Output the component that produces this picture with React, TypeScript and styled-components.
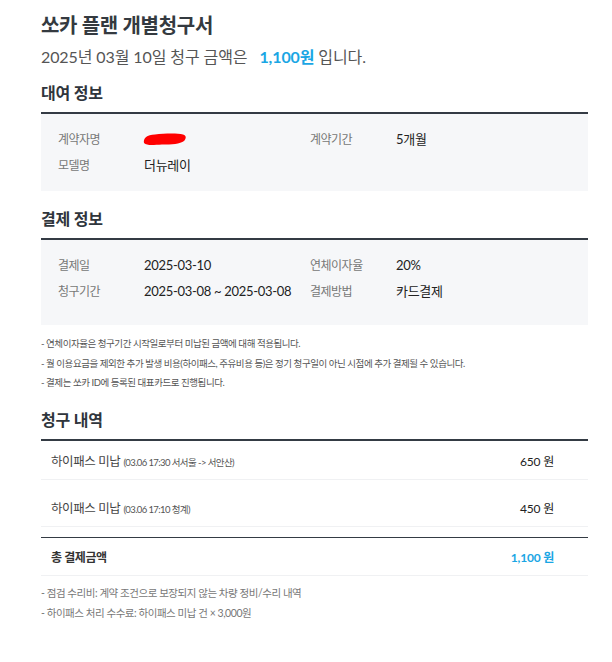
import React from "react";
import styled, { createGlobalStyle } from "styled-components";

const Global = createGlobalStyle`
  html, body { margin: 0; padding: 0; background: #fff; }
  body { font-family: Lato, "Noto Sans CJK KR", sans-serif; color: #333; }
`;

const Page = styled.div`
  width: 547px;
  padding: 12px 0 0 41px;
`;

const Title = styled.h1`
  margin: 0;
  font-size: 20px;
  line-height: 26px;
  font-weight: 700;
  color: #343a40;
  letter-spacing: -0.3px;
`;

const Subtitle = styled.p`
  margin: 8px 0 0;
  font-size: 16px;
  line-height: 22px;
  color: #555;
  letter-spacing: -0.1px;
`;

const Amount = styled.strong`
  color: #1aa6e4;
  font-weight: 700;
  margin-left: 8px;
`;

const SectionTitle = styled.h2<{ $top: number }>`
  margin: ${(p) => p.$top}px 0 0;
  font-size: 16px;
  line-height: 22px;
  font-weight: 700;
  color: #2f353c;
  letter-spacing: -0.2px;
`;

const InfoBox = styled.div<{ $bottom: number }>`
  margin-top: 8px;
  border-top: 2px solid #343b44;
  background: #f6f7f9;
  padding: 16px 0 ${(p) => p.$bottom}px 17px;
  display: grid;
  grid-template-columns: 86px 166px 86px 1fr;
  row-gap: 8px;
  align-items: center;
`;

const Label = styled.span`
  font-size: 12px;
  line-height: 18px;
  color: #777;
  letter-spacing: -0.5px;
  position: relative;
  top: 1px;
`;

const Value = styled.span`
  font-size: 13px;
  line-height: 18px;
  color: #222;
  letter-spacing: -0.3px;
  display: flex;
  align-items: center;
`;

const Notes = styled.ul<{ $top: number; $color: string; $gap: number }>`
  list-style: none;
  margin: ${(p) => p.$top}px 0 0;
  padding: 0;
  display: flex;
  flex-direction: column;
  gap: ${(p) => p.$gap}px;
  color: ${(p) => p.$color};
`;

const Note = styled.li<{ $size: number }>`
  font-size: ${(p) => p.$size}px;
  line-height: 14px;
  letter-spacing: -0.45px;
`;

const Table = styled.div`
  margin-top: 8px;
  border-top: 2px solid #343b44;
`;

const ItemRow = styled.div<{ $gapTop: number }>`
  margin-top: ${(p) => p.$gapTop}px;
  height: 38px;
  padding: 0 34px 0 10px;
  display: flex;
  align-items: center;
  justify-content: space-between;
  border-bottom: 1px solid #f0f1f3;
`;

const TotalRow = styled(ItemRow)`
  border-top: 1px solid #343b44;
  height: 37px;
`;

const ItemName = styled.span`
  font-size: 12.5px;
  color: #444;
  letter-spacing: -0.4px;
`;

const ItemDetail = styled.span`
  font-size: 9.5px;
  color: #555;
  letter-spacing: -0.6px;
  margin-left: 3px;
`;

const Price = styled.span<{ $accent?: boolean }>`
  font-size: 12px;
  color: ${(p) => (p.$accent ? "#1aa6e4" : "#222")};
  font-weight: ${(p) => (p.$accent ? 700 : 400)};
  letter-spacing: -0.2px;
`;

const TotalName = styled.span`
  font-size: 12px;
  font-weight: 700;
  color: #333;
  letter-spacing: -0.4px;
`;

const Redact = () => (
  <svg width="45" height="15" viewBox="0 0 45 15" style={{ marginLeft: -2 }}>
    <path
      d="M2 11 C1 6 5 3 13 2.5 C22 1.5 35 1 41 2.5 C45 3.5 44 7 42 9 C38 12 30 12.5 20 12.5 C12 12.8 5 14 2 11 Z"
      fill="#ff0000"
    />
  </svg>
);

export default function App() {
  return (
    <>
      <Global />
      <Page>
        <Title>쏘카 플랜 개별청구서</Title>
        <Subtitle>
          2025년 03월 10일 청구 금액은 <Amount>1,100원</Amount> 입니다.
        </Subtitle>

        <SectionTitle $top={14}>대여 정보</SectionTitle>
        <InfoBox $bottom={17}>
          <Label>계약자명</Label>
          <Value>
            <Redact />
          </Value>
          <Label>계약기간</Label>
          <Value>5개월</Value>
          <Label>모델명</Label>
          <Value>더뉴레이</Value>
          <span />
          <span />
        </InfoBox>

        <SectionTitle $top={17}>결제 정보</SectionTitle>
        <InfoBox $bottom={25}>
          <Label>결제일</Label>
          <Value>2025-03-10</Value>
          <Label>연체이자율</Label>
          <Value>20%</Value>
          <Label>청구기간</Label>
          <Value>2025-03-08 ~ 2025-03-08</Value>
          <Label>결제방법</Label>
          <Value>카드결제</Value>
        </InfoBox>

        <Notes $top={12} $color="#555" $gap={5.5}>
          <Note $size={9.5}>- 연체이자율은 청구기간 시작일로부터 미납된 금액에 대해 적용됩니다.</Note>
          <Note $size={9.5}>
            - 월 이용요금을 제외한 추가 발생 비용(하이패스, 주유비용 등)은 정기 청구일이 아닌 시점에 추가 결제될 수 있습니다.
          </Note>
          <Note $size={9.5}>- 결제는 쏘카 ID에 등록된 대표카드로 진행됩니다.</Note>
        </Notes>

        <SectionTitle $top={19}>청구 내역</SectionTitle>
        <Table>
          <ItemRow $gapTop={0}>
            <span>
              <ItemName>하이패스 미납</ItemName>
              <ItemDetail>(03.06 17:30 서서울 -&gt; 서안산)</ItemDetail>
            </span>
            <Price>650 원</Price>
          </ItemRow>
          <ItemRow $gapTop={8}>
            <span>
              <ItemName>하이패스 미납</ItemName>
              <ItemDetail>(03.06 17:10 청계)</ItemDetail>
            </span>
            <Price>450 원</Price>
          </ItemRow>
          <TotalRow $gapTop={10}>
            <TotalName>총 결제금액</TotalName>
            <Price $accent>1,100 원</Price>
          </TotalRow>
        </Table>

        <Notes $top={10} $color="#777" $gap={6}>
          <Note $size={10.5}>- 점검 수리비: 계약 조건으로 보장되지 않는 차량 정비/수리 내역</Note>
          <Note $size={10.5}>- 하이패스 처리 수수료: 하이패스 미납 건 × 3,000원</Note>
        </Notes>
      </Page>
    </>
  );
}
